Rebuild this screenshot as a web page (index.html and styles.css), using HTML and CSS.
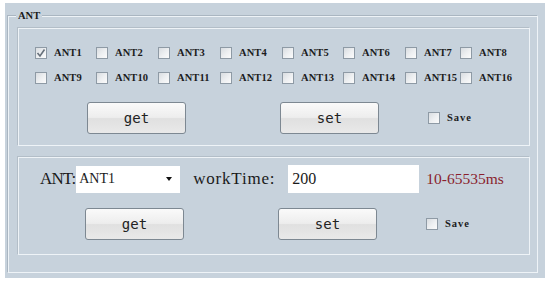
FILE: index.html
```html
<!DOCTYPE html>
<html>
<head>
<meta charset="utf-8">
<link rel="stylesheet" href="styles.css">
</head>
<body>
<div class="window">
  <div class="group">
    <span class="group-title">ANT</span>
    <div class="panel panel-top">
      <div class="checks">
        <label class="chk"><span class="box checked"><svg viewBox="0 0 12 12" width="12" height="12"><path d="M2.5 6 L5 9 L9.5 2.5" fill="none" stroke="#66707a" stroke-width="1.6"/></svg></span>ANT1</label>
        <label class="chk"><span class="box"></span>ANT2</label>
        <label class="chk"><span class="box"></span>ANT3</label>
        <label class="chk"><span class="box"></span>ANT4</label>
        <label class="chk"><span class="box"></span>ANT5</label>
        <label class="chk"><span class="box"></span>ANT6</label>
        <label class="chk"><span class="box"></span>ANT7</label>
        <label class="chk"><span class="box"></span>ANT8</label>
        <label class="chk"><span class="box"></span>ANT9</label>
        <label class="chk"><span class="box"></span>ANT10</label>
        <label class="chk"><span class="box"></span>ANT11</label>
        <label class="chk"><span class="box"></span>ANT12</label>
        <label class="chk"><span class="box"></span>ANT13</label>
        <label class="chk"><span class="box"></span>ANT14</label>
        <label class="chk"><span class="box"></span>ANT15</label>
        <label class="chk"><span class="box"></span>ANT16</label>
      </div>
      <div class="actions actions-top">
        <button class="btn">get</button>
        <button class="btn btn-set">set</button>
        <label class="chk save"><span class="box"></span>Save</label>
      </div>
    </div>
    <div class="panel panel-bottom">
      <div class="form-row">
        <span class="lbl lbl-ant">ANT:</span>
        <div class="select"><span class="select-text">ANT1</span><span class="arrow"></span></div>
        <span class="lbl lbl-wt">workTime:</span>
        <input class="field" type="text" value="200">
        <span class="hint">10-65535ms</span>
      </div>
      <div class="actions actions-bottom">
        <button class="btn">get</button>
        <button class="btn btn-set">set</button>
        <label class="chk save"><span class="box"></span>Save</label>
      </div>
    </div>
  </div>
</div>
</body>
</html>
```
FILE: styles.css
```css
html, body {
  margin: 0;
  padding: 0;
  background: #ffffff;
}

.window {
  box-sizing: border-box;
  margin: 3px 0 0 5px;
  width: 540px;
  height: 275px;
  padding: 13px 7px 5px 3px;
  background: #c7d2dc;
  display: flex;
}

.group {
  position: relative;
  flex: 1;
  box-sizing: border-box;
  border: 1px solid #eef3f7;
  box-shadow: -1px -1px 0 #aab6c1;
  padding: 11px 7px 0 9px;
  display: flex;
  flex-direction: column;
  gap: 11px;
}

.group-title {
  position: absolute;
  left: 7px;
  top: -8px;
  padding: 0 2px;
  background: #c7d2dc;
  font: bold 10.5px/14px "Liberation Serif", serif;
  color: #1a1a1a;
}

.panel {
  box-sizing: border-box;
  border: 1px solid #eef3f7;
  box-shadow: -1px -1px 0 #b3bec8;
}

.panel-top {
  height: 118px;
}

.panel-bottom {
  height: 98px;
}

.checks {
  padding: 18px 0 0 16px;
  display: grid;
  grid-template-columns: 61px 62px 62px 62px 61px 62px 55px auto;
  grid-auto-rows: 12px;
  row-gap: 13px;
}

.chk {
  display: flex;
  align-items: center;
  gap: 7px;
  font: bold 10.5px/12px "Liberation Serif", serif;
  color: #1c1c1c;
  letter-spacing: 0.1px;
}

.box {
  box-sizing: border-box;
  width: 12px;
  height: 12px;
  border: 1px solid #8e9aa5;
  background: linear-gradient(135deg, #d9dde1 0%, #eef0f2 55%, #fbfbfb 100%);
  display: flex;
  flex: none;
}

.box svg {
  margin: -1px;
}

.actions {
  display: flex;
  align-items: center;
}

.actions-top {
  margin-top: 18px;
  padding-left: 68px;
}

.actions-bottom {
  margin-top: 15px;
  padding-left: 66px;
}

.btn {
  box-sizing: border-box;
  width: 99px;
  height: 32px;
  margin: 0;
  padding: 0;
  border: 1px solid #7d8892;
  border-radius: 3px;
  background: linear-gradient(#fafafa 0%, #ededed 48%, #e0e0e0 52%, #e9e9e9 100%);
  font: 14px/30px "DejaVu Sans Mono", monospace;
  color: #222;
}

.btn-set {
  margin-left: 94px;
}

.save {
  margin-left: 49px;
  gap: 7px;
  letter-spacing: 1px;
}

.form-row {
  display: flex;
  align-items: center;
  padding: 7px 0 0 21px;
  height: 28px;
}

.lbl {
  font: 17px/20px "Liberation Serif", serif;
  color: #1a1a1a;
}

.lbl-ant {
  letter-spacing: -0.9px;
}

.select {
  box-sizing: border-box;
  margin-left: 1px;
  width: 104px;
  height: 27px;
  background: #ffffff;
  display: flex;
  align-items: center;
  justify-content: space-between;
  padding: 0 8px 0 3px;
}

.select-text {
  font: 14px/20px "Liberation Serif", serif;
  color: #1a1a1a;
}

.arrow {
  width: 0;
  height: 0;
  border-left: 3.5px solid transparent;
  border-right: 3.5px solid transparent;
  border-top: 4px solid #111;
}

.lbl-wt {
  margin-left: 13px;
  letter-spacing: 0.8px;
}

.field {
  box-sizing: border-box;
  margin-left: 13px;
  width: 131px;
  height: 28px;
  border: none;
  outline: none;
  background: #ffffff;
  padding: 0 4px;
  font: 16px/20px "Liberation Serif", serif;
  color: #1a1a1a;
}

.hint {
  margin-left: 7px;
  font: 15.5px/20px "Liberation Serif", serif;
  color: #8a1f2e;
}
```
